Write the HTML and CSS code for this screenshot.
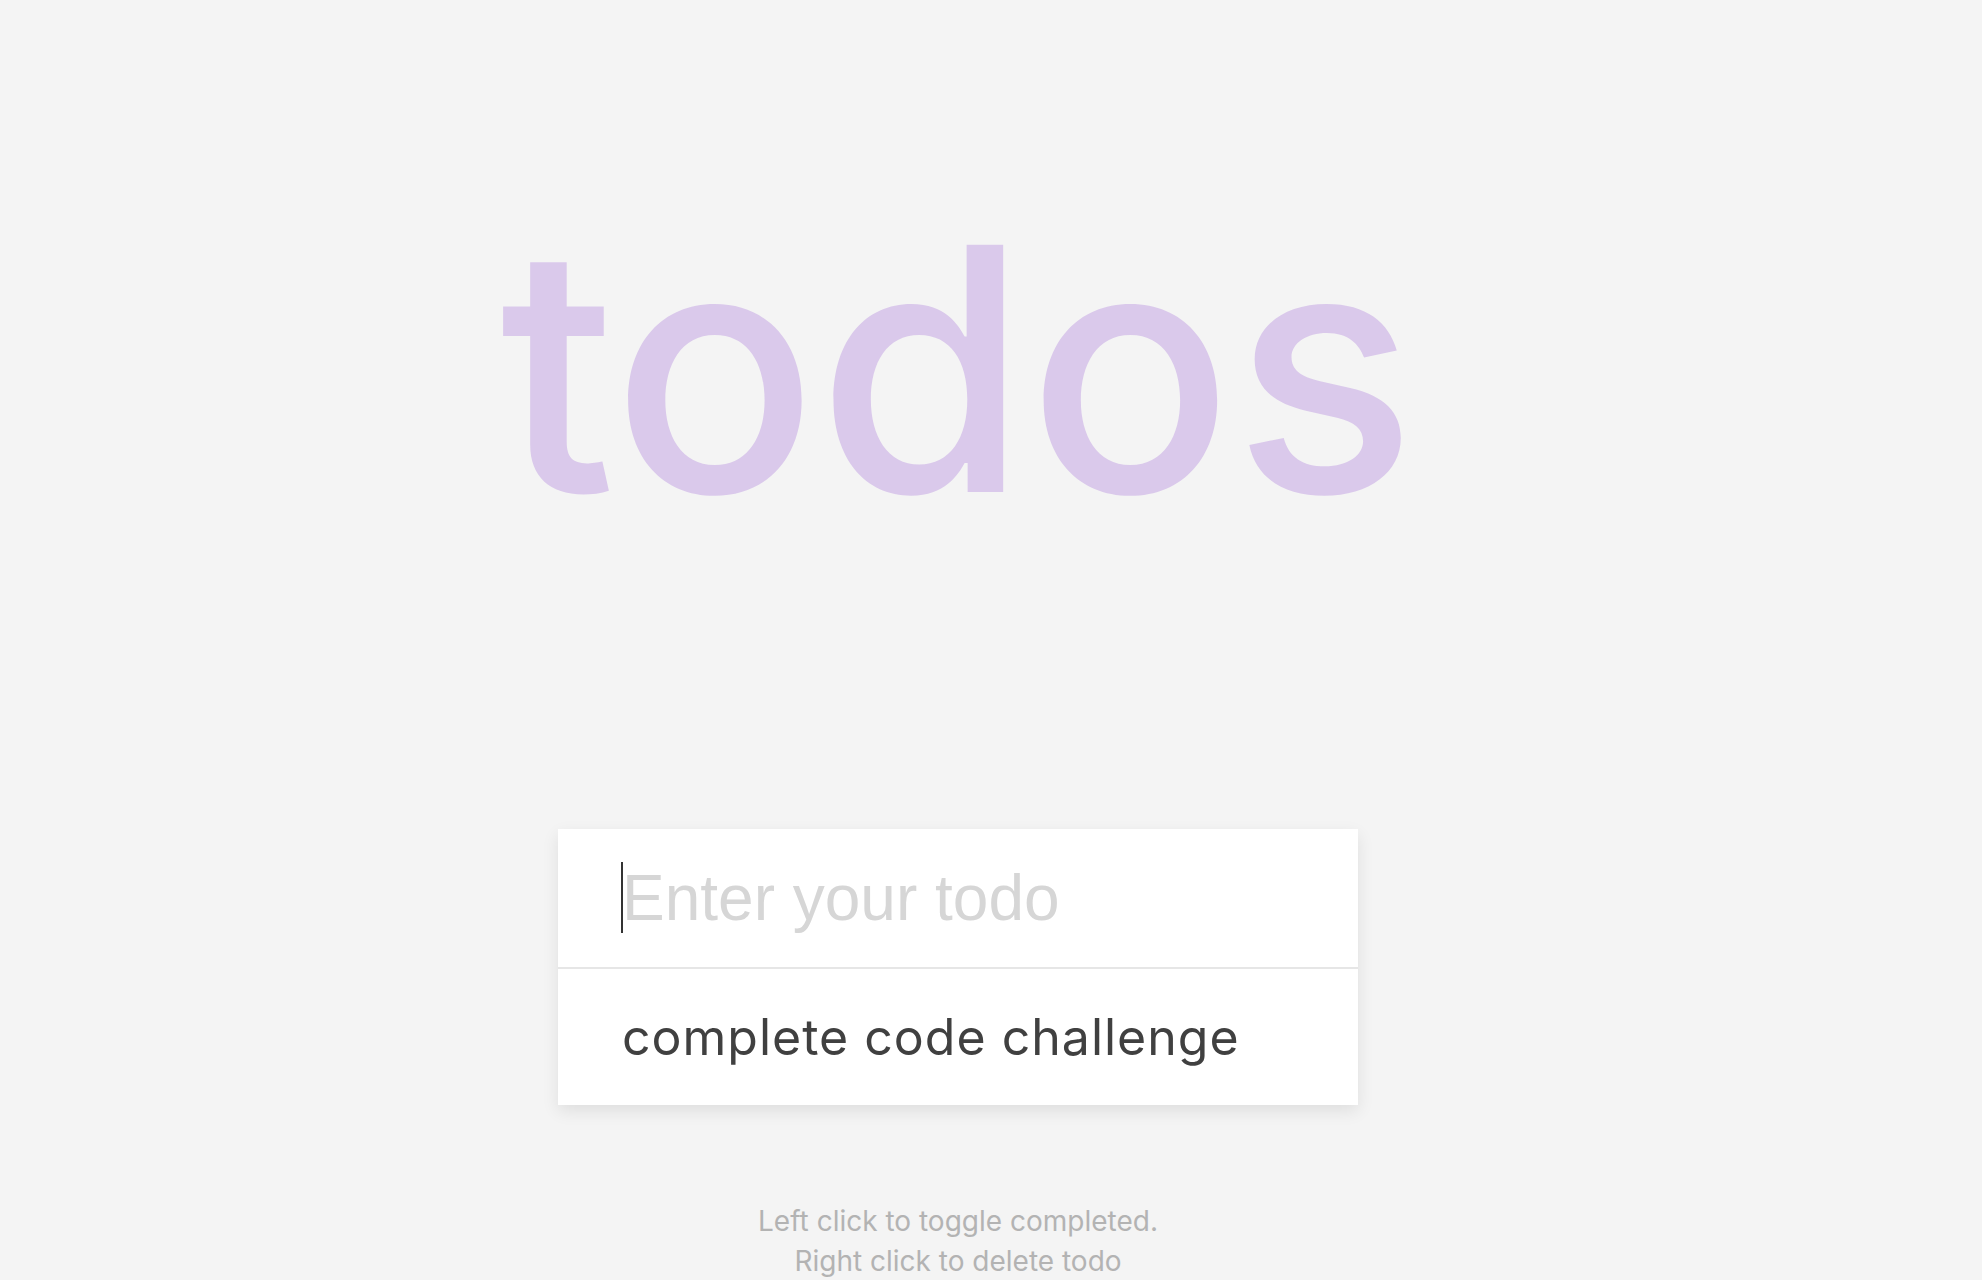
FILE: index.html
```html
<!DOCTYPE html>
<html lang="en">
<head>
<meta charset="utf-8">
<title>todos</title>
<link rel="stylesheet" href="styles.css">
</head>
<body>
<main class="app">
  <h1 class="title">todos</h1>
  <section class="card">
    <div class="entry">
      <input class="entry-input" type="text" placeholder="Enter your todo">
      <span class="caret"></span>
    </div>
    <ul class="todo-list">
      <li class="todo-item">complete code challenge</li>
    </ul>
  </section>
  <p class="hint">Left click to toggle completed.<br>Right click to delete todo</p>
</main>
</body>
</html>
```
FILE: styles.css
```css
* { box-sizing: border-box; }
html, body { margin: 0; padding: 0; }
body {
  background: #f4f4f4;
  font-family: "Inter", "Open Sans", sans-serif;
  min-height: 1280px;
  overflow: hidden;
}
.app {
  display: flex;
  flex-direction: column;
  align-items: center;
  padding-right: 66px;
}
.title {
  margin: 199px 0 0 0;
  font-family: "Inter", sans-serif;
  font-weight: 500;
  font-size: 340px;
  line-height: 1;
  color: #dac9eb;
  letter-spacing: 0;
}
.card {
  margin-top: 290px;
  width: 800px;
  background: #fff;
  box-shadow: 0 6px 16px rgba(0,0,0,0.09);
}
.entry {
  position: relative;
  height: 140px;
  border-bottom: 2px solid #e6e6e6;
}
.entry-input {
  display: block;
  width: 100%;
  height: 138px;
  border: 0;
  outline: none;
  padding: 0 64px;
  background: #fff;
  font-family: "Liberation Sans", Arial, sans-serif;
  font-size: 64px;
  color: #444;
  caret-color: transparent;
}
.entry-input::placeholder { color: #d6d6d6; }
.caret {
  position: absolute;
  left: 63px;
  top: 33px;
  width: 2px;
  height: 71px;
  background: #333;
}
.todo-list {
  list-style: none;
  margin: 0;
  padding: 0;
}
.todo-item {
  display: flex;
  align-items: center;
  height: 136px;
  padding-left: 64px;
  font-size: 50px;
  letter-spacing: 1px;
  color: #404040;
}
.hint {
  margin: 96px 0 0 0;
  text-align: center;
  font-size: 28px;
  line-height: 40px;
  color: #b3b3b3;
}
```
